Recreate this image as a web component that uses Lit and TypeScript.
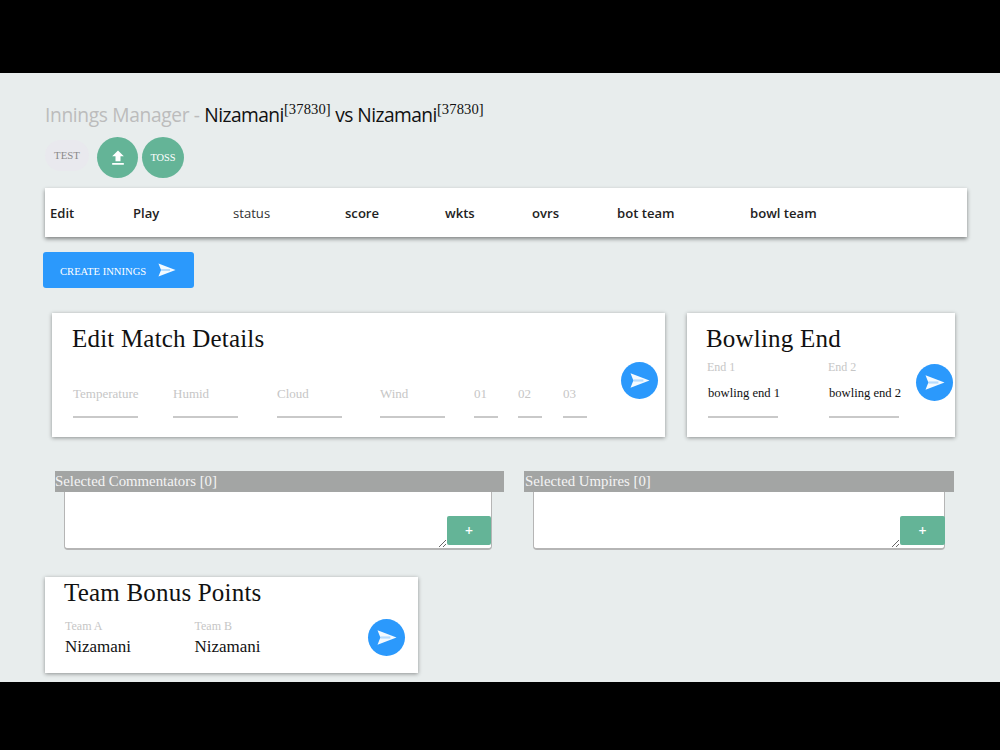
import { LitElement, html, css } from "lit";
import { customElement } from "lit/decorators.js";

const send = () => html`<svg viewBox="0 0 20 15"><path fill="#fff" fill-opacity=".95" d="M.5.2 19.5 7.5.5 14.8 3.4 7.5z"/><path fill="#2b99fc" fill-opacity=".3" d="M3.4 6.4h10v2.2h-10z"/></svg>`;

@customElement("app-root")
export class AppRoot extends LitElement {
  static styles = css`
    :host { display: block; width: 1000px; height: 750px; background: #000; overflow: hidden; --serif: "Liberation Serif", "Times New Roman", serif; --sans: "Open Sans", "Noto Sans", sans-serif; }
    .page { box-sizing: border-box; margin-top: 73px; height: 609px; background: #e8eded; overflow: hidden; padding-top: 27px; font-family: var(--serif); color: #111; }
    .title { margin: 0 0 0 45px; height: 37px; font: 400 19.2px/30px var(--sans); letter-spacing: -.55px; color: #111; white-space: nowrap; }
    .title .dim { color: #bcbcbc; letter-spacing: -.35px; }
    .title sup { font-family: var(--serif); font-size: 14.6px; letter-spacing: .1px; line-height: 0; vertical-align: baseline; position: relative; top: -8px; }
    .actions { display: flex; align-items: center; margin-left: 45px; height: 41px; }
    .pill { width: 44px; height: 31px; border-radius: 16px; background: #e9e9ee; color: #8a8a8a; font-size: 10.8px; display: flex; align-items: center; justify-content: center; margin: 0 8px 4px 0; padding-bottom: 1px; box-sizing: border-box; }
    .circle { width: 41px; height: 41px; border-radius: 50%; background: #64b497; color: #fff; display: flex; align-items: center; justify-content: center; font-size: 10.4px; margin-right: 4px; }
    .circle + .circle { width: 42px; }
    .circle svg { width: 20px; height: 20px; }
    .table { box-sizing: border-box; margin: 10px 33px 0 45px; height: 49px; background: #fff; box-shadow: 0 2px 4px rgba(0,0,0,.45); display: grid; grid-template-columns: 83px 100px 112px 100px 87px 85px 133px 1fr; align-items: center; padding-left: 5px; font: 600 13.1px var(--sans); color: #222; }
    .table .plain { font-weight: 400; color: #333; }
    .create { box-sizing: border-box; width: 151px; height: 36px; margin: 15px 0 0 43px; border-radius: 3px; background: #2b99fc; color: #fff; display: flex; align-items: center; padding: 3px 0 0 17px; font-size: 10.6px; }
    .create svg { width: 18px; height: 14px; margin: -3px 0 0 12px; }
    .row { display: flex; margin: 25px 0 0 52px; gap: 22px; }
    .card { background: #fff; box-shadow: 0 1px 4px rgba(0,0,0,.4); box-sizing: border-box; }
    h2 { margin: 0; font-weight: 400; font-size: 25px; line-height: 30px; letter-spacing: .2px; color: #111; }
    .match { width: 613px; height: 124px; padding: 11px 0 0 20px; display: flex; flex-direction: column; }
    .match .body { display: flex; align-items: flex-start; margin-top: 8px; }
    .fields { display: grid; grid-template-columns: 100px 104px 103px 94px 44px 45px 24px; margin: 25px 0 0 1px; width: 536px; flex: none; }
    .label { font-size: 12px; line-height: 14px; color: #c6c6c6; }
    .fields .label { font-size: 13px; }
    .line { border-bottom: 2px solid #c9c9c9; height: 15px; }
    .w65 { width: 65px; }
    .w24 { width: 24px; }
    .fab { flex: none; width: 37px; height: 37px; border-radius: 50%; background: #2b99fc; display: flex; align-items: center; justify-content: center; }
    .fab svg { width: 20px; height: 15px; }
    .match .fab { margin: 0 0 0 12px; }
    .bowl { width: 268px; height: 124px; padding: 11px 0 0 19px; }
    .bowl .body { display: flex; align-items: flex-start; }
    .bowl .f { width: 121px; padding: 6px 0 0 1px; box-sizing: border-box; }
    .bowl .val { color: #111; font-size: 12.6px; line-height: 14px; margin: 12px 0 0 1px; }
    .bowl .line { width: 70px; height: 16px; margin-left: 1px; }
    .bowl .fab { margin: 10px 0 0 -32px; position: relative; }
    .pickers { display: flex; margin: 34px 0 0 55px; }
    .picker { flex: none; }
    .picker.one { width: 449px; margin-right: 20px; }
    .picker.two { width: 430px; }
    .bar { background: #a3a5a4; color: #f4f4f4; height: 21px; line-height: 21px; font-size: 14.8px; white-space: nowrap; }
    .picker.two .bar { padding-left: 1px; }
    .box { box-sizing: border-box; height: 58px; margin: 0 12px 0 9px; background: #fff; border: 1px solid #b5b5b5; border-width: 0 1px 2px 1px; border-radius: 0 0 4px 4px; display: flex; }
    .picker.two .box { margin: 0 9px; }
    textarea { flex: 1; min-width: 0; border: 0; outline: 0; padding: 0; margin: 0; background: transparent; resize: both; }
    .add { flex: none; align-self: flex-start; width: 44px; height: 29px; margin-top: 24px; background: #64b497; color: #fff; border-radius: 2px; display: flex; align-items: center; justify-content: center; font: 600 14px var(--sans); }
    .picker.two .add { width: 45px; margin-right: -1px; }
    .bonus { width: 373px; height: 96px; margin: 27px 0 0 45px; padding: 1px 0 0 19px; }
    .bonus .body { display: flex; align-items: flex-start; margin-top: 11px; padding-left: 1px; }
    .bonus .f { width: 129.5px; }
    .bonus .val { font-size: 17px; line-height: 20px; margin-top: 4px; color: #111; }
    .bonus .fab { margin: 0 0 0 44px; }
  `;

  private field(label: string, cls: string) {
    return html`<div><div class="label">${label}</div><div class="line ${cls}"></div></div>`;
  }

  private picker(cls: string, title: string) {
    return html`<div class="picker ${cls}">
      <div class="bar">${title}</div>
      <div class="box"><textarea aria-label=${title}></textarea><div class="add">+</div></div>
    </div>`;
  }

  render() {
    return html`<div class="page">
      <h1 class="title"><span class="dim">Innings Manager - </span>Nizamani<sup>[37830]</sup> vs Nizamani<sup>[37830]</sup></h1>
      <div class="actions">
        <div class="pill">TEST</div>
        <div class="circle"><svg viewBox="0 0 24 24"><path fill="#fff" d="M9 16h6v-6h4l-7-7-7 7h4zm-4 2h14v2H5z"/></svg></div>
        <div class="circle">TOSS</div>
      </div>
      <div class="table">
        <span>Edit</span><span>Play</span><span class="plain">status</span><span>score</span><span>wkts</span><span>ovrs</span><span>bot team</span><span>bowl team</span>
      </div>
      <div class="create">CREATE INNINGS ${send()}</div>
      <div class="row">
        <div class="card match">
          <h2>Edit Match Details</h2>
          <div class="body">
            <div class="fields">
              ${this.field("Temperature", "w65")}${this.field("Humid", "w65")}${this.field("Cloud", "w65")}${this.field("Wind", "w65")}
              ${this.field("01", "w24")}${this.field("02", "w24")}${this.field("03", "w24")}
            </div>
            <div class="fab">${send()}</div>
          </div>
        </div>
        <div class="card bowl">
          <h2>Bowling End</h2>
          <div class="body">
            <div class="f"><div class="label">End 1</div><div class="val">bowling end 1</div><div class="line"></div></div>
            <div class="f"><div class="label">End 2</div><div class="val">bowling end 2</div><div class="line"></div></div>
            <div class="fab">${send()}</div>
          </div>
        </div>
      </div>
      <div class="pickers">
        ${this.picker("one", "Selected Commentators [0]")}
        ${this.picker("two", "Selected Umpires [0]")}
      </div>
      <div class="card bonus">
        <h2>Team Bonus Points</h2>
        <div class="body">
          <div class="f"><div class="label">Team A</div><div class="val">Nizamani</div></div>
          <div class="f"><div class="label">Team B</div><div class="val">Nizamani</div></div>
          <div class="fab">${send()}</div>
        </div>
      </div>
    </div>`;
  }
}
